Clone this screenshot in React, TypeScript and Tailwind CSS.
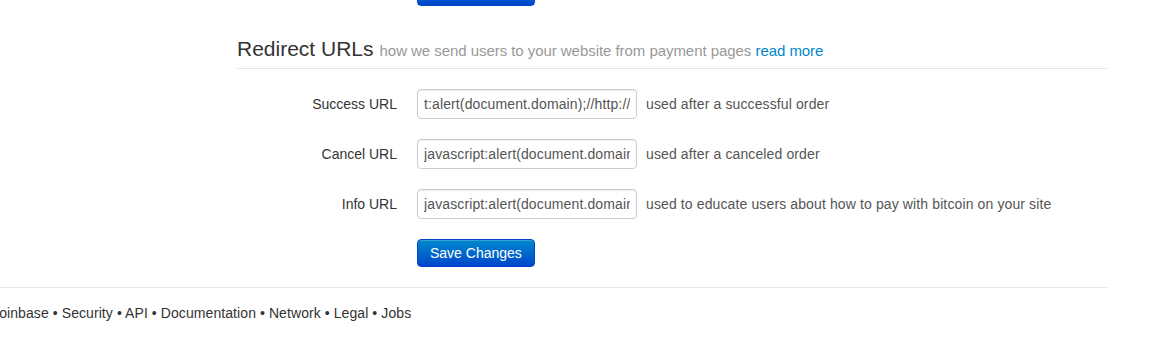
const rows = [
  { label: 'Success URL', value: 't:alert(document.domain);//http://', help: 'used after a successful order' },
  { label: 'Cancel URL', value: 'javascript:alert(document.domain);//http://', help: 'used after a canceled order' },
  { label: 'Info URL', value: 'javascript:alert(document.domain);//http://', help: 'used to educate users about how to pay with bitcoin on your site' },
];

const footerLinks = ['Coinbase', 'Security', 'API', 'Documentation', 'Network', 'Legal', 'Jobs'];

function PrimaryButton({ children }: { children: React.ReactNode }) {
  return (
    <button className="h-[28px] px-[12px] rounded-[4px] border border-[#0044cc] bg-gradient-to-b from-[#0088cc] to-[#0044cc] text-white text-[14px] leading-[20px] shadow-[inset_0_1px_0_rgba(255,255,255,0.2)]">
      {children}
    </button>
  );
}

export default function App() {
  return (
    <div className="w-[1159px] h-[337px] overflow-hidden bg-white font-['Liberation_Sans',Arial,sans-serif] text-[14px] text-[#333]">
      <div className="w-[1107px]">
        <div className="pl-[237px]">
          <div className="pl-[180px] -mt-[22px]">
            <PrimaryButton>Save Changes</PrimaryButton>
          </div>

          <div className="mt-[23px] h-[40px] flex items-baseline gap-[6px] border-b border-[#e5e5e5] leading-[40px]">
            <span className="text-[21px] text-[#333]">Redirect URLs</span>
            <span className="text-[15px] text-[#999] tracking-[-0.05px]">
              how we send users to your website from payment pages{' '}
              <a className="text-[#0088cc]">read more</a>
            </span>
          </div>

          <div className="mt-[20px] flex flex-col gap-[20px]">
            {rows.map(r => (
              <div key={r.label} className="flex items-center h-[30px]">
                <label className="w-[160px] text-right text-[#333]">{r.label}</label>
                <input
                  readOnly
                  defaultValue={r.value}
                  className="ml-[20px] w-[220px] h-[30px] px-[6px] border border-[#ccc] rounded-[4px] text-[14px] text-[#555] tracking-[0.12px] outline-none shadow-[inset_0_1px_1px_rgba(0,0,0,0.075)]"
                />
                <span className="ml-[9px] text-[#555] tracking-[0.12px]">{r.help}</span>
              </div>
            ))}
            <div className="pl-[180px]">
              <PrimaryButton>Save Changes</PrimaryButton>
            </div>
          </div>
        </div>

        <div className="mt-[20px] border-t border-[#e5e5e5] pt-[15px]">
          <p className="-ml-[11px] leading-[20px] text-[#333] tracking-[0.08px]">
            {footerLinks.join(' • ')}
          </p>
        </div>
      </div>
    </div>
  );
}
